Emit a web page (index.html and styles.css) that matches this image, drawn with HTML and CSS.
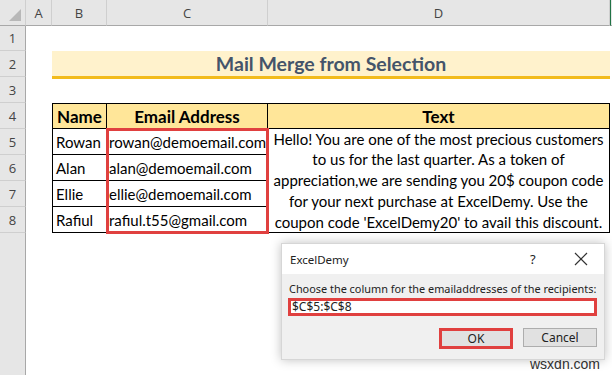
FILE: index.html
```html
<!DOCTYPE html>
<html>
<head>
    <title>Mail Merge from Selection</title>
    <link rel="stylesheet" href="styles.css">
</head>
<body>
    <div class="sheet">
        <!-- column headers -->
        <div class="corner">
            <svg width="14" height="14" viewBox="0 0 14 14"><polygon points="13,1 13,13 1,13" fill="#b8b8b8"/></svg>
        </div>
        <div class="col-head ca">A</div>
        <div class="col-head cb">B</div>
        <div class="col-head cc">C</div>
        <div class="col-head cd">D</div>
        <div class="col-head col-rest"></div>

        <!-- row headers -->
        <div class="row-head r1">1</div>
        <div class="row-head r2">2</div>
        <div class="row-head r3">3</div>
        <div class="row-head r4">4</div>
        <div class="row-head r5">5</div>
        <div class="row-head r6">6</div>
        <div class="row-head r7">7</div>
        <div class="row-head r8">8</div>
        <div class="row-head r-rest"></div>

        <!-- title -->
        <div class="title">Mail Merge from Selection</div>

        <!-- table -->
        <div class="cell th name-col r4 first">Name</div>
        <div class="cell th email-col r4">Email Address</div>
        <div class="cell th text-col r4">Text</div>

        <div class="cell name-col r5 first">Rowan</div>
        <div class="cell name-col r6 first">Alan</div>
        <div class="cell name-col r7 first">Ellie</div>
        <div class="cell name-col r8 first">Rafiul</div>

        <div class="emails">
            <div class="cell email">rowan@demoemail.com</div>
            <div class="cell email">alan@demoemail.com</div>
            <div class="cell email">ellie@demoemail.com</div>
            <div class="cell email">rafiul.t55@gmail.com</div>
        </div>

        <div class="cell message">
            Hello! You are one of the most precious customers<br>
            to us for the last quarter. As a token of<br>
            appreciation,we are sending you 20$ coupon code<br>
            for your next purchase at ExcelDemy. Use the<br>
            coupon code 'ExcelDemy20' to avail this discount.
        </div>
    </div>

    <div class="dialog">
        <div class="dialog-title">
            <span class="dialog-name">ExcelDemy</span>
            <span class="dialog-help">?</span>
            <span class="dialog-close">
                <svg width="14" height="14" viewBox="0 0 14 14"><path d="M1 1 L13 13 M13 1 L1 13" stroke="#333" stroke-width="1.2" fill="none"/></svg>
            </span>
        </div>
        <div class="dialog-body">
            <div class="prompt">Choose the column for the emailaddresses of the recipients:</div>
            <div class="range-input">$C$5:$C$8</div>
            <div class="buttons">
                <div class="btn btn-ok">OK</div>
                <div class="btn btn-cancel">Cancel</div>
            </div>
        </div>
    </div>

    <div class="watermark">wsxdn.com</div>
</body>
</html>
```

FILE: styles.css
```css
body {
  margin: 0;
  padding: 0;
  width: 612px;
  height: 375px;
  overflow: hidden;
  background: #fff;
  font-family: Lato, "Liberation Sans", sans-serif;
  position: relative;
}

.sheet {
  display: grid;
  grid-template-columns: 26px 26px 55px 161px 342px 1fr;
  grid-template-rows: 26px 25px 26px 26px 26px 26px 26px 26px 26px 1fr;
  height: 375px;
}

/* headers */
.corner,
.col-head,
.row-head {
  background: #e6e6e6;
  color: #444;
  font-family: "Open Sans", sans-serif;
  font-size: 13px;
  display: flex;
  align-items: center;
  justify-content: center;
  box-sizing: border-box;
}

.corner {
  grid-row: 1;
  grid-column: 1;
  border-right: 1px solid #cfcfcf;
  border-bottom: 1px solid #a8a8a8;
  justify-content: flex-end;
  align-items: flex-end;
  padding: 0 3px 3px 0;
}

.col-head {
  grid-row: 1;
  border-right: 1px solid #cfcfcf;
  border-bottom: 1px solid #a8a8a8;
}

.ca { grid-column: 2; }
.cb { grid-column: 3; }
.cc { grid-column: 4; }
.cd { grid-column: 5; }

.col-rest {
  grid-column: 6;
  border-right: none;
  border-left: 1px solid #217346;
}

.row-head {
  grid-column: 1;
  border-bottom: 1px solid #cfcfcf;
  border-right: 1px solid #a8a8a8;
}

.r-rest { grid-row: 10; border-bottom: none; }

.r1 { grid-row: 2; }
.r2 { grid-row: 3; }
.r3 { grid-row: 4; }
.r4 { grid-row: 5; }
.r5 { grid-row: 6; }
.r6 { grid-row: 7; }
.r7 { grid-row: 8; }
.r8 { grid-row: 9; }

/* title row */
.title {
  grid-row: 3;
  grid-column: 3 / 6;
  background: #fff2cc;
  border-bottom: 3px solid #f2bb1c;
  margin-bottom: -2px;
  color: #44546a;
  font-weight: 700;
  font-size: 19.5px;
  display: flex;
  align-items: center;
  justify-content: center;
  padding-bottom: 1px;
}

/* table */
.cell {
  box-sizing: border-box;
  border-right: 1px solid #000;
  border-bottom: 1px solid #000;
  font-size: 15px;
  color: #000;
  display: flex;
  align-items: center;
  padding-left: 3px;
  white-space: nowrap;
}

.first { border-left: 1px solid #000; }

.th {
  background: #ffe699;
  font-weight: 700;
  font-size: 17px;
  justify-content: center;
  padding-left: 0;
  border-top: 1px solid #000;
}

.name-col { grid-column: 3; }
.email-col { grid-column: 4; }
.text-col { grid-column: 5; }

.emails {
  grid-column: 4;
  grid-row: 6 / 10;
  display: grid;
  grid-template-rows: repeat(4, 1fr);
  outline: 3px solid #e0403f;
  outline-offset: -2px;
  position: relative;
  z-index: 1;
}

.email { padding-left: 2px; }

.message {
  grid-column: 5;
  grid-row: 6 / 10;
  text-align: center;
  justify-content: center;
  padding-left: 0;
  line-height: 20.8px;
  white-space: normal;
}

/* dialog */
.dialog {
  position: absolute;
  left: 281px;
  top: 243px;
  width: 322px;
  height: 115px;
  background: #f0f0f0;
  border: 1px solid #d6d6d6;
  box-shadow: 0 0 10px rgba(0, 0, 0, 0.25);
  font-family: "Noto Sans", sans-serif;
  color: #222;
  z-index: 5;
}

.dialog-title {
  height: 30px;
  background: #fff;
  display: flex;
  align-items: center;
  padding-left: 8px;
  font-size: 11.5px;
}

.dialog-name { flex: 1; }

.dialog-help {
  width: 14px;
  margin-right: 30px;
  font-size: 13px;
}

.dialog-close {
  width: 14px;
  margin-right: 16px;
  display: flex;
}

.dialog-body {
  padding: 6px 6px 0 6px;
}

.prompt {
  font-size: 10.9px;
  white-space: nowrap;
  padding-left: 1px;
  height: 18px;
  line-height: 18px;
}

.range-input {
  box-sizing: border-box;
  height: 18px;
  width: 309px;
  background: #fff;
  border: 3px solid #e0403f;
  font-size: 12px;
  line-height: 12px;
  padding-left: 1px;
}

.buttons {
  display: flex;
  justify-content: flex-end;
  gap: 10px;
  margin-top: 12px;
  padding-right: 1px;
}

.btn {
  box-sizing: border-box;
  width: 74px;
  height: 21px;
  background: #e1e1e1;
  border: 1px solid #adadad;
  display: flex;
  align-items: center;
  justify-content: center;
  font-size: 12px;
}

.btn-ok {
  border: 3px solid #e0403f;
}

.btn-cancel {
  height: 19px;
}

.watermark {
  position: absolute;
  left: 530px;
  top: 356px;
  font-family: "Liberation Sans", sans-serif;
  font-size: 14px;
  color: #333;
}
```
